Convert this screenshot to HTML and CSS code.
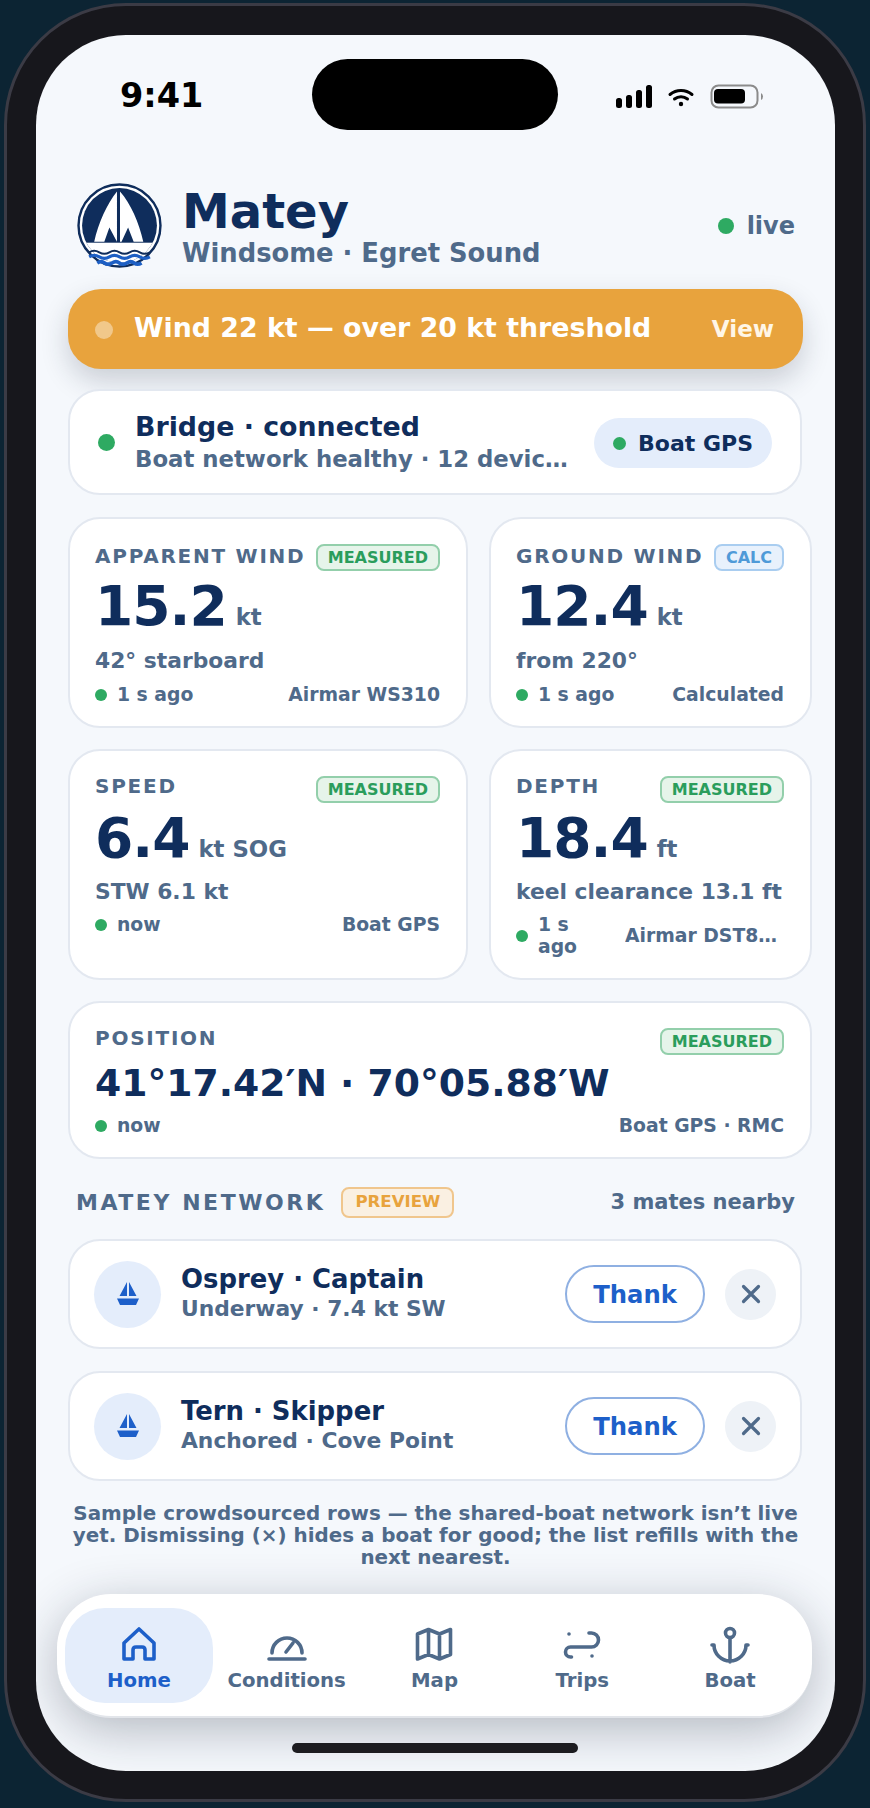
FILE: index.html
```html
<!DOCTYPE html>
<html lang="en">
<head>
<meta charset="utf-8">
<title>Matey</title>
<link rel="stylesheet" href="styles.css">
</head>
<body>
<div class="phone">
  <div class="screen">
    <div class="island"></div>
    <div class="status">
      <span class="time">9:41</span>
      <svg class="status-icons" width="150" height="26" viewBox="0 0 150 26">
        <rect x="2" y="14" width="6" height="10" rx="2.500" fill="#000"/>
        <rect x="12" y="11" width="6" height="13" rx="2.500" fill="#000"/>
        <rect x="22" y="6" width="6" height="18" rx="2.500" fill="#000"/>
        <rect x="32" y="1" width="6" height="23" rx="2.500" fill="#000"/>
        <path d="M56 10.500a17 17 0 0 1 22 0M60.500 15a10.500 10.500 0 0 1 13 0" fill="none" stroke="#000" stroke-width="3" stroke-linecap="round"/>
        <circle cx="67" cy="20" r="2.200" fill="#000"/>
        <rect x="97.500" y="1.500" width="46" height="22" rx="7" fill="none" stroke="#8b8b8b" stroke-width="2"/>
        <rect x="100" y="5" width="31" height="14.500" rx="4" fill="#000"/>
        <path d="M147 9v7q2-1 2-3.500t-2-3.500z" fill="#8b8b8b"/>
      </svg>
    </div>

    <header class="head">
      <svg class="logo" width="85" height="85" viewBox="0 0 84 84">
        <defs><clipPath id="logo-inner"><circle cx="42" cy="42" r="37"/></clipPath></defs>
        <circle cx="42" cy="42" r="42" fill="#fff"/>
        <circle cx="42" cy="42" r="40.500" fill="none" stroke="#0f2d5c" stroke-width="2.400"/>
        <circle cx="42" cy="42" r="37" fill="#0f2d5c"/>
        <g clip-path="url(#logo-inner)">
          <rect x="0" y="59" width="84" height="30" fill="#fff"/>
        </g>
        <path d="M39.500 8.500C30 20 21 40 17 58H27L32 44L39.500 58Z" fill="#fff"/>
        <path d="M42.500 8.500C53 20 61.500 40 65.500 58H56L50.500 44L44 58H42.500Z" fill="#fff"/>
        <path d="M12 68.500q5-3 10 0t10 0 10 0 10 0 10 0 10 0" fill="none" stroke="#0f2d5c" stroke-width="2"/>
        <path d="M12 73q5-3 10 0t10 0 10 0 10 0 10 0 10 0" fill="none" stroke="#1d5fc4" stroke-width="3"/>
        <path d="M20 79q4-2.500 7.300 0t7.300 0 7.300 0 7.300 0 7.300 0 7.300 0" fill="none" stroke="#1d5fc4" stroke-width="3.600"/>
      </svg>
      <div class="brand">
        <div class="brand-name">Matey</div>
        <div class="brand-sub">Windsome · Egret Sound</div>
      </div>
      <div class="live"><i class="dot dot-live"></i>live</div>
    </header>

    <div class="alert">
      <i class="alert-dot"></i>
      <span class="alert-text">Wind 22 kt — over 20 kt threshold</span>
      <span class="alert-link">View</span>
    </div>

    <section class="bridge card">
      <i class="dot dot-bridge"></i>
      <div class="bridge-text">
        <div class="bridge-title">Bridge · connected</div>
        <div class="bridge-sub">Boat network healthy · 12 devices online</div>
      </div>
      <div class="pill"><i class="dot dot-pill"></i>Boat GPS</div>
    </section>

    <section class="metrics">
      <article class="card metric metric-first">
        <div class="metric-top"><span class="label">APPARENT WIND</span><span class="badge badge-m">MEASURED</span></div>
        <div class="value">15.2<span class="unit">kt</span></div>
        <div class="sub">42° starboard</div>
        <div class="foot"><span class="age"><i class="dot dot-foot"></i><span>1 s ago</span></span><span class="src">Airmar WS310</span></div>
      </article>
      <article class="card metric metric-first">
        <div class="metric-top"><span class="label">GROUND WIND</span><span class="badge badge-c">CALC</span></div>
        <div class="value">12.4<span class="unit">kt</span></div>
        <div class="sub">from 220°</div>
        <div class="foot"><span class="age"><i class="dot dot-foot"></i><span>1 s ago</span></span><span class="src">Calculated</span></div>
      </article>
      <article class="card metric">
        <div class="metric-top"><span class="label">SPEED</span><span class="badge badge-m">MEASURED</span></div>
        <div class="value">6.4<span class="unit">kt SOG</span></div>
        <div class="sub">STW 6.1 kt</div>
        <div class="foot"><span class="age"><i class="dot dot-foot"></i><span>now</span></span><span class="src">Boat GPS</span></div>
      </article>
      <article class="card metric">
        <div class="metric-top"><span class="label">DEPTH</span><span class="badge badge-m">MEASURED</span></div>
        <div class="value">18.4<span class="unit">ft</span></div>
        <div class="sub">keel clearance 13.1 ft</div>
        <div class="foot"><span class="age age-wrap"><i class="dot dot-foot"></i><span>1 s ago</span></span><span class="src src-cut">Airmar DST800 transducer</span></div>
      </article>
      <article class="card metric metric-wide">
        <div class="metric-top"><span class="label">POSITION</span><span class="badge badge-m">MEASURED</span></div>
        <div class="value value-pos">41°17.42′N · 70°05.88′W</div>
        <div class="foot"><span class="age"><i class="dot dot-foot"></i><span>now</span></span><span class="src">Boat GPS · RMC</span></div>
      </article>
    </section>

    <div class="net-head">
      <span class="net-title">MATEY NETWORK</span>
      <span class="badge badge-p">PREVIEW</span>
      <span class="net-count">3 mates nearby</span>
    </div>

    <section class="mate card">
      <div class="avatar">
        <svg width="24" height="26" viewBox="0 0 24 26"><path d="M11 1V15H3.500ZM13 1L20.500 15H13Z M1 17.500H23L20 24H4Z" fill="#1d5fc9"/></svg>
      </div>
      <div class="mate-text">
        <div class="mate-name">Osprey · Captain</div>
        <div class="mate-sub">Underway · 7.4 kt SW</div>
      </div>
      <button class="thank">Thank</button>
      <div class="close">
        <svg width="22" height="22" viewBox="0 0 22 22"><path d="M3.500 3.500L18.500 18.500M18.500 3.500L3.500 18.500" stroke="#4f6a8a" stroke-width="3.200" stroke-linecap="round" fill="none"/></svg>
      </div>
    </section>
    <section class="mate card">
      <div class="avatar">
        <svg width="24" height="26" viewBox="0 0 24 26"><path d="M11 1V15H3.500ZM13 1L20.500 15H13Z M1 17.500H23L20 24H4Z" fill="#1d5fc9"/></svg>
      </div>
      <div class="mate-text">
        <div class="mate-name">Tern · Skipper</div>
        <div class="mate-sub">Anchored · Cove Point</div>
      </div>
      <button class="thank">Thank</button>
      <div class="close">
        <svg width="22" height="22" viewBox="0 0 22 22"><path d="M3.500 3.500L18.500 18.500M18.500 3.500L3.500 18.500" stroke="#4f6a8a" stroke-width="3.200" stroke-linecap="round" fill="none"/></svg>
      </div>
    </section>

    <p class="note">Sample crowdsourced rows — the shared-boat network isn’t live yet. Dismissing (×) hides a boat for good; the list refills with the next nearest.</p>

    <nav class="nav">
      <div class="tab tab-on">
        <svg class="tab-icon" width="48" height="48" viewBox="0 0 48 48"><path d="M9 39V23L24 9L39 23V39H30V30Q30 27 27 27H21Q18 27 18 30V39Z"/></svg>
        <span>Home</span>
      </div>
      <div class="tab">
        <svg class="tab-icon" width="48" height="48" viewBox="0 0 48 48"><path d="M9 33A15 15 0 0 1 39 33M6 39H42M23 32L30 23"/></svg>
        <span>Conditions</span>
      </div>
      <div class="tab">
        <svg class="tab-icon" width="48" height="48" viewBox="0 0 48 48"><path d="M7.500 14L18.500 9.500L29.500 14L40.500 9.500V34.500L29.500 39L18.500 34.500L7.500 39ZM18.500 9.500V34.500M29.500 14V39"/></svg>
        <span>Map</span>
      </div>
      <div class="tab">
        <svg class="tab-icon" width="48" height="48" viewBox="0 0 48 48"><path d="M31 13H33.500A7 7 0 0 1 33.500 27H12.500A5 5 0 0 0 12.500 37H13.500"/><circle class="fill" cx="11" cy="14" r="1.800"/><circle class="fill" cx="34" cy="36" r="1.800"/></svg>
        <span>Trips</span>
      </div>
      <div class="tab">
        <svg class="tab-icon" width="48" height="48" viewBox="0 0 48 48"><circle cx="24" cy="13" r="4.500"/><path d="M24 18V42M6 25H8A16 16 0 0 0 40 25H42"/></svg>
        <span>Boat</span>
      </div>
    </nav>
    <div class="home-bar"></div>
  </div>
</div>
</body>
</html>
```
FILE: styles.css
```css
* { box-sizing: border-box; }
html, body { margin: 0; padding: 0; }
body {
  width: 870px;
  height: 1808px;
  overflow: hidden;
  background: #0c2433;
  font-family: "DejaVu Sans", sans-serif;
  font-weight: 700;
  color: #4f6a8a;
}
i { display: block; font-style: normal; }

.phone {
  width: 862px;
  height: 1799px;
  margin: 3px 0 0 4px;
  padding: 29px 28px 28px 29px;
  background: #17171c;
  border: 3px solid #3b3b45;
  border-radius: 122px;
}
.screen {
  position: relative;
  width: 799px;
  height: 1736px;
  overflow: hidden;
  background: #f5f8fc;
  border-radius: 90px;
}
.island {
  position: absolute;
  left: 276px;
  top: 24px;
  width: 246px;
  height: 71px;
  border-radius: 36px;
  background: #000;
}

.status {
  display: flex;
  justify-content: space-between;
  align-items: flex-start;
  height: 148px;
  padding: 42px 71px 0 84px;
}
.time { font-size: 33.500px; line-height: 38px; color: #000; }
.status-icons { margin-top: 7px; }

.head {
  display: flex;
  align-items: center;
  height: 84px;
  padding: 0 40px 0 41px;
}
.brand { flex: 1; margin-left: 20px; padding-top: 4px; }
.brand-name { font-size: 48px; line-height: 50px; color: #0f2d5c; }
.brand-sub { margin-top: 2px; font-size: 25.800px; line-height: 30px; }
.live { display: flex; align-items: center; gap: 13px; padding-top: 2px; font-size: 24px; line-height: 30px; }

.dot { border-radius: 50%; background: #2eaa62; flex: none; }
.dot-live { width: 16px; height: 16px; }
.dot-bridge { width: 17px; height: 17px; }
.dot-pill { width: 13px; height: 13px; }
.dot-foot { width: 12px; height: 12px; }

.alert {
  display: flex;
  align-items: center;
  width: 735px;
  height: 80px;
  margin: 22px 0 0 32px;
  padding: 0 29px 0 27px;
  background: #e8a33d;
  border-radius: 33px;
  color: #fff;
  box-shadow: 0 12px 28px rgba(30, 40, 60, 0.2);
}
.alert-dot { width: 18px; height: 18px; margin-top: 2px; border-radius: 50%; background: rgba(255, 255, 255, 0.4); }
.alert-text { flex: 1; margin-left: 21px; padding-bottom: 4px; font-size: 26.800px; }
.alert-link { font-size: 23px; color: #fff6e6; }

.card {
  background: #fff;
  border: 2px solid #e3e8f0;
  border-radius: 32px;
}

.bridge {
  display: flex;
  align-items: center;
  width: 734px;
  height: 106px;
  margin: 20px 0 0 32px;
  padding: 0 28px 0 28px;
}
.bridge-text { flex: 1; min-width: 0; margin: 0 26px 0 20px; }
.bridge-title { font-size: 26.800px; line-height: 34px; color: #0f2d5c; }
.bridge-sub {
  font-size: 22.800px;
  line-height: 30px;
  white-space: nowrap;
  overflow: hidden;
  text-overflow: ellipsis;
}
.pill {
  display: flex;
  align-items: center;
  gap: 12px;
  height: 50px;
  margin-top: 2px;
  padding: 0 19px;
  flex: none;
  border-radius: 25px;
  background: #e4edfb;
  color: #0f2d5c;
  font-size: 22px;
}

.metrics {
  display: grid;
  grid-template-columns: 400px 323px;
  grid-template-rows: 211px 231px 158px;
  gap: 21px 21px;
  width: 744px;
  margin: 22px 0 0 32px;
}
.metric { padding: 22px 26px 0 25px; }
.metric-wide { grid-column: 1 / span 2; }
.metric-top { display: flex; justify-content: space-between; align-items: flex-start; }
.label { font-size: 20px; line-height: 26px; letter-spacing: 1.750px; }
.badge {
  flex: none;
  height: 27px;
  padding: 0 10px;
  border: 2px solid;
  border-radius: 8px;
  font-size: 16px;
  line-height: 23px;
}
.metric-top .badge { margin-top: 3px; }
.badge-m { color: #2a9d5c; background: #e6f4ea; border-color: #93cfab; }
.badge-c { color: #4f9ad8; background: #e8f1fc; border-color: #a9cdf0; }
.badge-p { color: #e8a33d; background: #faf0e2; border-color: #f0c68d; }
.value { margin-top: 7px; font-size: 55px; line-height: 56px; letter-spacing: -1px; color: #0f2d5c; }
.unit { margin-left: 9px; font-size: 22.800px; letter-spacing: 0; color: #4f6a8a; }
.value-pos { margin-top: 5px; font-size: 37.700px; line-height: 46px; letter-spacing: 0; }
.sub { font-size: 21.800px; line-height: 30px; white-space: nowrap; }
.foot {
  display: flex;
  justify-content: space-between;
  align-items: center;
  gap: 14px;
  margin-top: 7px;
  font-size: 18.800px;
  line-height: 22px;
}
.metric-first .label { margin-top: 2px; }
.metric-first .sub { margin-top: 1px; }
.metric-first .foot { margin-top: 8px; }
.value-pos + .foot { margin-top: 8.500px; }
.age { display: flex; align-items: center; gap: 10px; min-width: 0; }
.src { white-space: nowrap; }
.age-wrap { flex: 1; }
.src-cut { flex: 0 0 159px; overflow: hidden; text-overflow: ellipsis; }

.net-head {
  display: flex;
  align-items: center;
  width: 719px;
  height: 34px;
  margin: 26px 0 0 40px;
}
.net-title { font-size: 22px; letter-spacing: 2.550px; }
.badge-p { height: 31px; margin-left: 16px; padding: 0 12px; font-size: 16.600px; line-height: 25px; }
.net-count { margin-left: auto; font-size: 21px; }

.mate {
  display: flex;
  align-items: center;
  width: 734px;
  height: 110px;
  margin: 20px 0 0 32px;
  padding: 0 24px;
}
.mate + .mate { margin-top: 22px; }
.avatar {
  display: flex;
  align-items: center;
  justify-content: center;
  flex: none;
  width: 67px;
  height: 67px;
  border-radius: 50%;
  background: #e4edfb;
}
.mate-text { flex: 1; margin-left: 20px; padding-bottom: 2px; }
.mate-name { font-size: 25.900px; line-height: 32px; color: #0f2d5c; }
.mate-sub { font-size: 21.800px; line-height: 28px; }
.thank {
  flex: none;
  width: 140px;
  height: 58px;
  padding: 0;
  border: 2px solid #8fb0e2;
  border-radius: 29px;
  background: #fff;
  color: #1d5fc9;
  font: inherit;
  font-size: 24.300px;
}
.close {
  display: flex;
  align-items: center;
  justify-content: center;
  flex: none;
  width: 51px;
  height: 51px;
  margin-left: 20px;
  border-radius: 50%;
  background: #eef2f7;
}

.note {
  width: 745px;
  margin: 22px 0 0 27px;
  font-size: 19.900px;
  line-height: 22px;
  text-align: center;
}

.nav {
  display: flex;
  align-items: center;
  width: 755px;
  height: 124px;
  margin: 25px 0 0 21px;
  padding: 1px 8px 0;
  background: #fff;
  border-bottom: 2px solid #e2e5ea;
  border-radius: 54px;
  box-shadow: 0 12px 50px rgba(25, 35, 55, 0.3);
}
.tab {
  display: flex;
  flex-direction: column;
  align-items: center;
  flex: 1;
  height: 95px;
  padding-top: 12px;
  border-radius: 40px;
  font-size: 19.700px;
  line-height: 24px;
}
.tab-on { background: #e4edfb; color: #1d5fc9; }
.tab-icon {
  margin-bottom: 1px;
  fill: none;
  stroke: currentColor;
  stroke-width: 3.600;
  stroke-linecap: round;
  stroke-linejoin: round;
}
.tab-icon .fill { fill: currentColor; stroke: none; }

.home-bar {
  width: 286px;
  height: 10px;
  margin: 25px 0 0 256px;
  border-radius: 5px;
  background: #1c1c20;
}
```
